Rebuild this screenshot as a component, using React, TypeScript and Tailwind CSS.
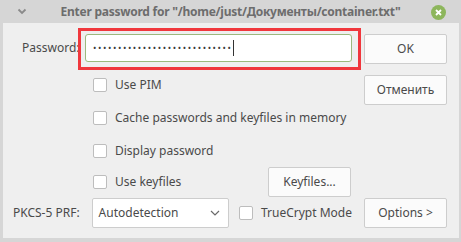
import React, { useState } from 'react';

const Checkbox: React.FC<{ label: string }> = ({ label }) => {
  const [on, setOn] = useState(false);
  return (
    <label className="flex items-center cursor-default whitespace-nowrap" onClick={() => setOn(!on)}>
      <span className="w-[14px] h-[14px] rounded-[2px] border border-[#bdbdbd] bg-white flex items-center justify-center text-[10px] leading-none">
        {on ? '✓' : ''}
      </span>
      <span className="ml-[8px]">{label}</span>
    </label>
  );
};

const Button: React.FC<{ children: React.ReactNode; className?: string }> = ({ children, className = '' }) => (
  <button className={`h-[30px] w-[83px] rounded-[2px] border border-[#cdcdcd] bg-[#fbfbfb] text-[#4a4a4a] whitespace-nowrap ${className}`}>
    {children}
  </button>
);

const App: React.FC = () => {
  return (
    <div
      className="w-[461px] h-[242px] bg-[#d6d6d6] flex flex-col text-[12px] text-[#4a4a4a]"
      style={{ fontFamily: '"Noto Sans", "Open Sans", sans-serif' }}
    >
      {/* title bar */}
      <div className="h-[23px] flex items-center relative">
        <svg className="absolute left-[17px] top-[8px]" width="10" height="7" viewBox="0 0 10 7">
          <path d="M1.5 1.5 L5 5 L8.5 1.5" fill="none" stroke="#8a8a8a" strokeWidth="1.8" />
        </svg>
        <div className="flex-1 text-center font-bold text-[#6d6d6d] text-[12px] tracking-[-0.25px] leading-none pt-[1px] whitespace-nowrap">
          Enter password for "/home/just/Документы/container.txt"
        </div>
        <div className="absolute left-[431px] top-[5px] w-[15px] h-[15px] rounded-full bg-[#8db65c] flex items-center justify-center">
          <svg width="7" height="7" viewBox="0 0 7 7">
            <path d="M1 1 L6 6 M6 1 L1 6" stroke="white" strokeWidth="1.8" />
          </svg>
        </div>
      </div>

      {/* content */}
      <div className="flex-1 ml-[3px] mr-[2px] mb-[4px] bg-[#efefef] flex relative">
        {/* red highlight */}
        <div className="absolute left-[75px] top-[5px] w-[283px] h-[42px] border-[3px] border-[#f0373d] pointer-events-none z-10" />

        <div className="w-[349px] flex flex-col pt-[11px]">
          <div className="flex items-center h-[28px]">
            <span className="pl-[19px] w-[82px] whitespace-nowrap">Password:</span>
            <div className="flex-1 h-[28px] rounded-[3px] border border-[#9cb97d] bg-white flex items-center pl-[7px]">
              <span className="text-[9px] tracking-[1.6px] text-[#3a3a3a]">••••••••••••••••••••••••••••</span>
              <span className="w-[1px] h-[16px] bg-[#333]" />
            </div>
          </div>
          <div className="flex flex-col pl-[90px] mt-[6px]">
            <div className="h-[33px] flex items-center"><Checkbox label="Use PIM" /></div>
            <div className="h-[33px] flex items-center"><Checkbox label="Cache passwords and keyfiles in memory" /></div>
            <div className="h-[33px] flex items-center"><Checkbox label="Display password" /></div>
            <div className="h-[30px] flex items-center">
              <Checkbox label="Use keyfiles" />
              <Button className="ml-auto mr-[1px] w-[82px]">Keyfiles...</Button>
            </div>
          </div>
          <div className="flex items-center mt-[1px] h-[30px] pl-[10px]">
            <span className="w-[79px] whitespace-nowrap">PKCS-5 PRF:</span>
            <div className="w-[138px] h-[30px] rounded-[2px] border border-[#cdcdcd] bg-white flex items-center pl-[6px] pr-[8px]">
              <span className="flex-1">Autodetection</span>
              <svg width="10" height="6" viewBox="0 0 10 6">
                <path d="M1 1 L5 5 L9 1" fill="none" stroke="#6a6a6a" strokeWidth="1.2" />
              </svg>
            </div>
            <div className="ml-[10px]"><Checkbox label="TrueCrypt Mode" /></div>
          </div>
        </div>

        <div className="ml-[12px] flex flex-col pt-[11px] pb-[10px]">
          <Button>OK</Button>
          <Button className="mt-[11px]">Отменить</Button>
          <Button className="mt-auto">Options &gt;</Button>
        </div>
      </div>
    </div>
  );
};

export default App;
